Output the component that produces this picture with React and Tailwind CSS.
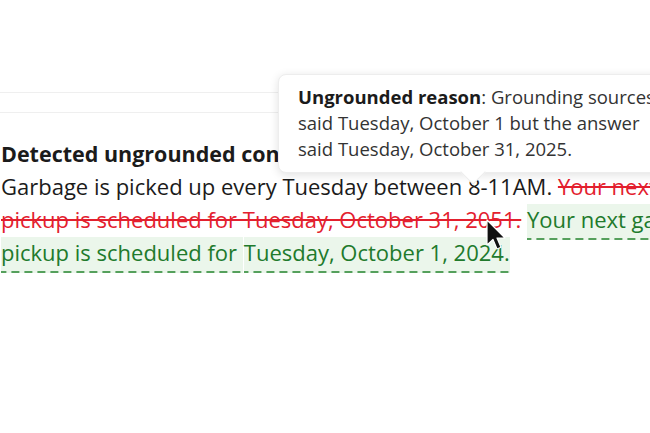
import React from 'react';

const font = { fontFamily: '"Open Sans", "Noto Sans", Arial, sans-serif' };

const dashed =
  'bg-[#ebf6eb] [background-image:linear-gradient(to_right,#55a05c_8px,transparent_8px)] bg-[length:13px_2px] bg-bottom bg-repeat-x pb-[6px]';

function Cursor() {
  return (
    <svg
      className="absolute left-[484px] top-[219px]"
      width="22"
      height="34"
      viewBox="0 0 22 34"
    >
      <path
        d="M3 1 L3 26 L9 20.5 L13 30 L17 28.3 L13 19 L21 19 Z"
        fill="#111"
        stroke="#fff"
        strokeWidth="1.2"
        strokeLinejoin="round"
      />
    </svg>
  );
}

function Tooltip() {
  return (
    <div className="absolute left-[278px] top-[74px] w-[420px] h-[99px] bg-white rounded-lg border border-[#ededed] shadow-[0_2px_10px_rgba(0,0,0,0.12)]">
      <div className="absolute left-[185px] bottom-[-9px] w-[18px] h-[18px] rotate-45 bg-white border-r border-b border-[#ededed]" />
      <div className="relative pl-[19px] pt-[9px] text-[18.5px] leading-[26px] text-[#333] whitespace-nowrap">
        <div>
          <span className="font-bold text-[#1b1b1b]">Ungrounded reason</span>: Grounding sources
        </div>
        <div>said Tuesday, October 1 but the answer</div>
        <div>said Tuesday, October 31, 2025.</div>
      </div>
    </div>
  );
}

export default function App() {
  return (
    <div className="relative w-[650px] h-[433px] overflow-hidden bg-white" style={font}>
      <div className="pt-[92px]">
        <div className="border-t border-[#efefef] h-[20px]" />
        <div className="border-t border-[#efefef]" />

        <div className="pt-[24px] pl-[1px] text-[#1b1b1b] whitespace-nowrap">
          <div className="text-[21.5px] leading-[33px] font-bold">Detected ungrounded content</div>
          <div className="text-[22px] leading-[33px]">
            Garbage is picked up every Tuesday between 8-11AM.{' '}
            <span className="text-[#e3202e] line-through decoration-2">Your next garbage</span>
          </div>
          <div className="text-[22px] leading-[33px]">
            <span className="text-[#e3202e] line-through decoration-2">
              pickup is scheduled for Tuesday, October 31, 2051.
            </span>{' '}
            <span className={`text-[#217a2c] ${dashed}`}>Your next garbage</span>
          </div>
          <div className="text-[22px] leading-[33px] text-[#217a2c]">
            <span className={dashed}>pickup is scheduled for </span>
            <span className={`${dashed} ml-[1px]`}>Tuesday, October 1, 2024.</span>
          </div>
        </div>
      </div>

      <Tooltip />
      <Cursor />
    </div>
  );
}
